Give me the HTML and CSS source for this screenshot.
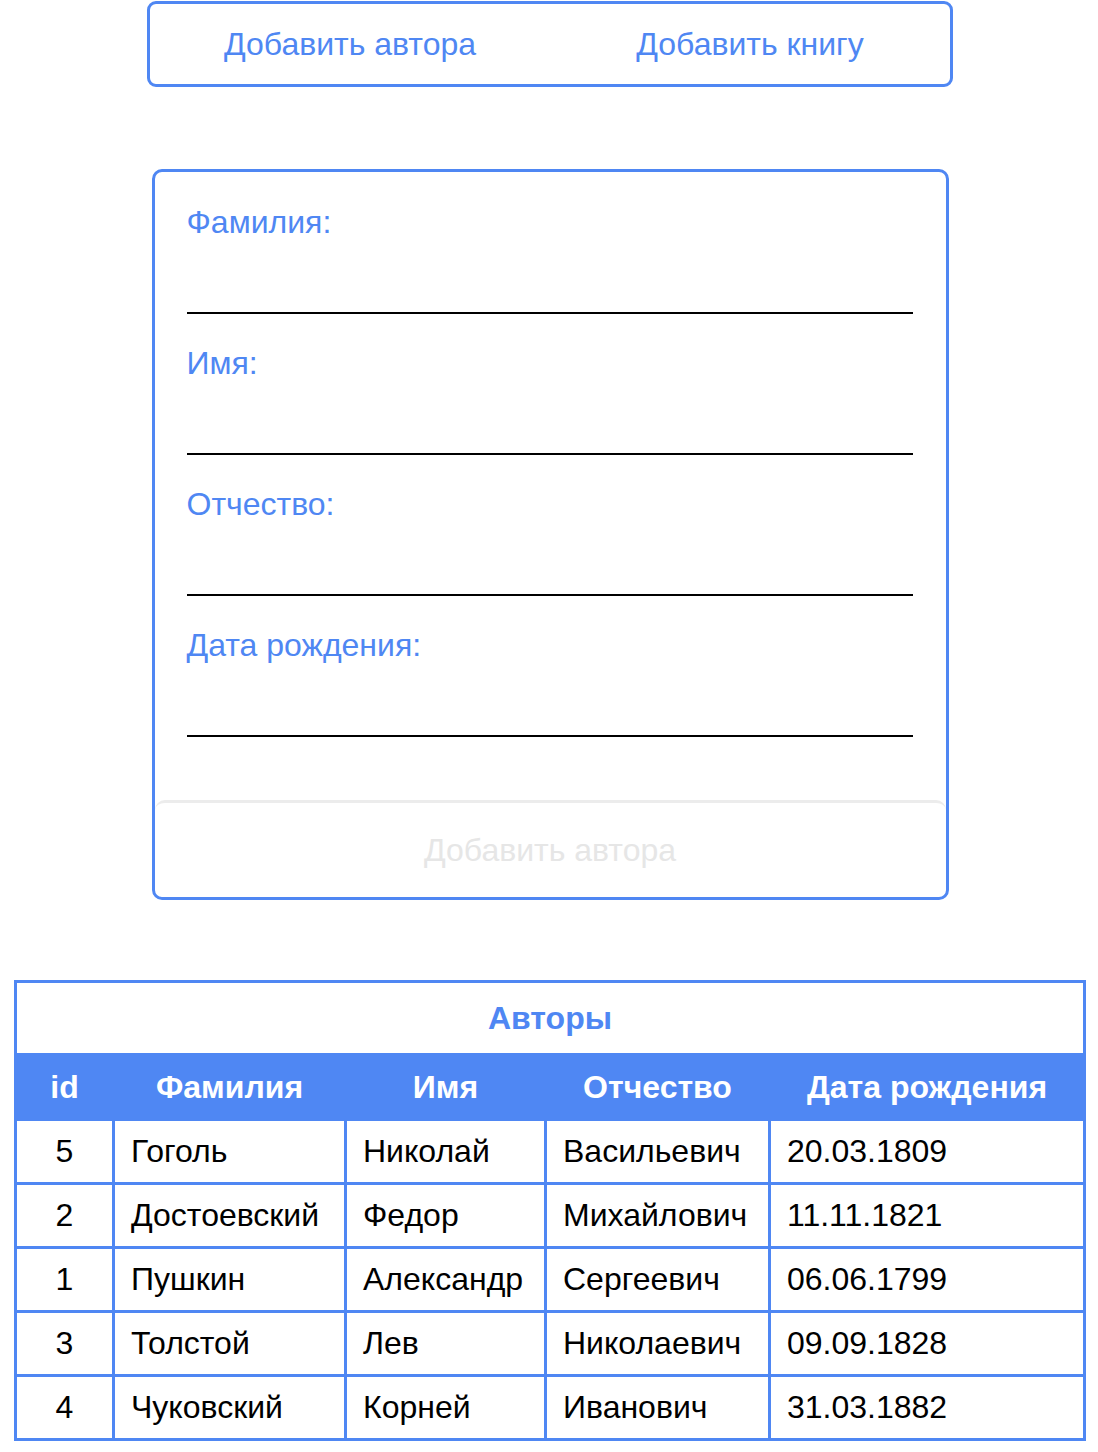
FILE: index.html
```html
<!DOCTYPE html>
<html lang="ru">
<head>
    <meta charset="UTF-8">
    <meta name="viewport" content="width=device-width, initial-scale=1.0">
    <title>Авторы</title>
    <link rel="stylesheet" href="styles.css">
</head>
<body>
    <nav class="menu">
        <a class="menu-item" href="#">Добавить автора</a>
        <a class="menu-item" href="#">Добавить книгу</a>
    </nav>

    <form class="author-form">
        <div class="field">
            <label for="lastname">Фамилия:</label>
            <input type="text" id="lastname" name="lastname">
        </div>
        <div class="field">
            <label for="firstname">Имя:</label>
            <input type="text" id="firstname" name="firstname">
        </div>
        <div class="field">
            <label for="patronymic">Отчество:</label>
            <input type="text" id="patronymic" name="patronymic">
        </div>
        <div class="field">
            <label for="birthdate">Дата рождения:</label>
            <input type="text" id="birthdate" name="birthdate">
        </div>
        <button type="submit" class="submit" disabled>Добавить автора</button>
    </form>

    <table class="authors">
        <colgroup>
            <col class="col-id">
            <col class="col-last">
            <col class="col-first">
            <col class="col-middle">
            <col class="col-date">
        </colgroup>
        <thead>
            <tr class="title-row"><th colspan="5">Авторы</th></tr>
            <tr class="head-row">
                <th>id</th>
                <th>Фамилия</th>
                <th>Имя</th>
                <th>Отчество</th>
                <th>Дата рождения</th>
            </tr>
        </thead>
        <tbody>
            <tr><td class="id">5</td><td>Гоголь</td><td>Николай</td><td>Васильевич</td><td>20.03.1809</td></tr>
            <tr><td class="id">2</td><td>Достоевский</td><td>Федор</td><td>Михайлович</td><td>11.11.1821</td></tr>
            <tr><td class="id">1</td><td>Пушкин</td><td>Александр</td><td>Сергеевич</td><td>06.06.1799</td></tr>
            <tr><td class="id">3</td><td>Толстой</td><td>Лев</td><td>Николаевич</td><td>09.09.1828</td></tr>
            <tr><td class="id">4</td><td>Чуковский</td><td>Корней</td><td>Иванович</td><td>31.03.1882</td></tr>
        </tbody>
    </table>
</body>
</html>
```

FILE: styles.css
```css
body {
    font-family: "Liberation Sans", Arial, sans-serif;
    font-size: 32px;
    margin: 0;
    padding: 1px 0 11px 2px;
    background-color: #fff;
}
.menu {
    display: flex;
    width: 800px;
    height: 80px;
    margin: 0 auto;
    border: 3px solid #4f87f3;
    border-radius: 9px;
    align-items: center;
}
.menu-item {
    flex: 1;
    text-align: center;
    color: #4f87f3;
    text-decoration: none;
    line-height: 37px;
}
.author-form {
    width: 791px;
    margin: 82px auto 0;
    padding-top: 32px;
    border: 3px solid #4f87f3;
    border-radius: 10px;
    overflow: hidden;
}
.field {
    display: flex;
    flex-direction: column;
    margin: 0 33px 31px 32px;
}
label {
    color: #4f87f3;
    line-height: 37px;
}
.field input {
    height: 36px;
    margin-top: 35px;
    padding: 0;
    border: none;
    border-bottom: 2px solid #000;
    font: inherit;
    outline: none;
}
.submit {
    display: block;
    width: 100%;
    height: 97px;
    margin-top: 63px;
    padding: 0;
    border: none;
    border-top: 3px solid #ececec;
    border-radius: 10px;
    background-color: #fff;
    color: #e6e6e6;
    font: inherit;
    line-height: 37px;
}
.authors {
    width: 1072px;
    margin: 80px auto 0;
    border-collapse: collapse;
    table-layout: fixed;
    border: 3px solid #4f87f3;
}
.col-id { width: 98px; }
.col-last { width: 232px; }
.col-first { width: 200px; }
.col-middle { width: 224px; }
.authors th,
.authors td {
    border: 3px solid #4f87f3;
    line-height: 37px;
    white-space: nowrap;
}
.title-row th {
    height: 70px;
    padding: 0;
    color: #4f87f3;
    background-color: #fff;
}
.head-row th {
    height: 62px;
    padding: 0;
    color: #fff;
    background-color: #4f87f3;
}
.authors td {
    height: 61px;
    padding: 0 0 0 16px;
    color: #000;
}
.authors td.id {
    padding: 0;
    text-align: center;
}
```
